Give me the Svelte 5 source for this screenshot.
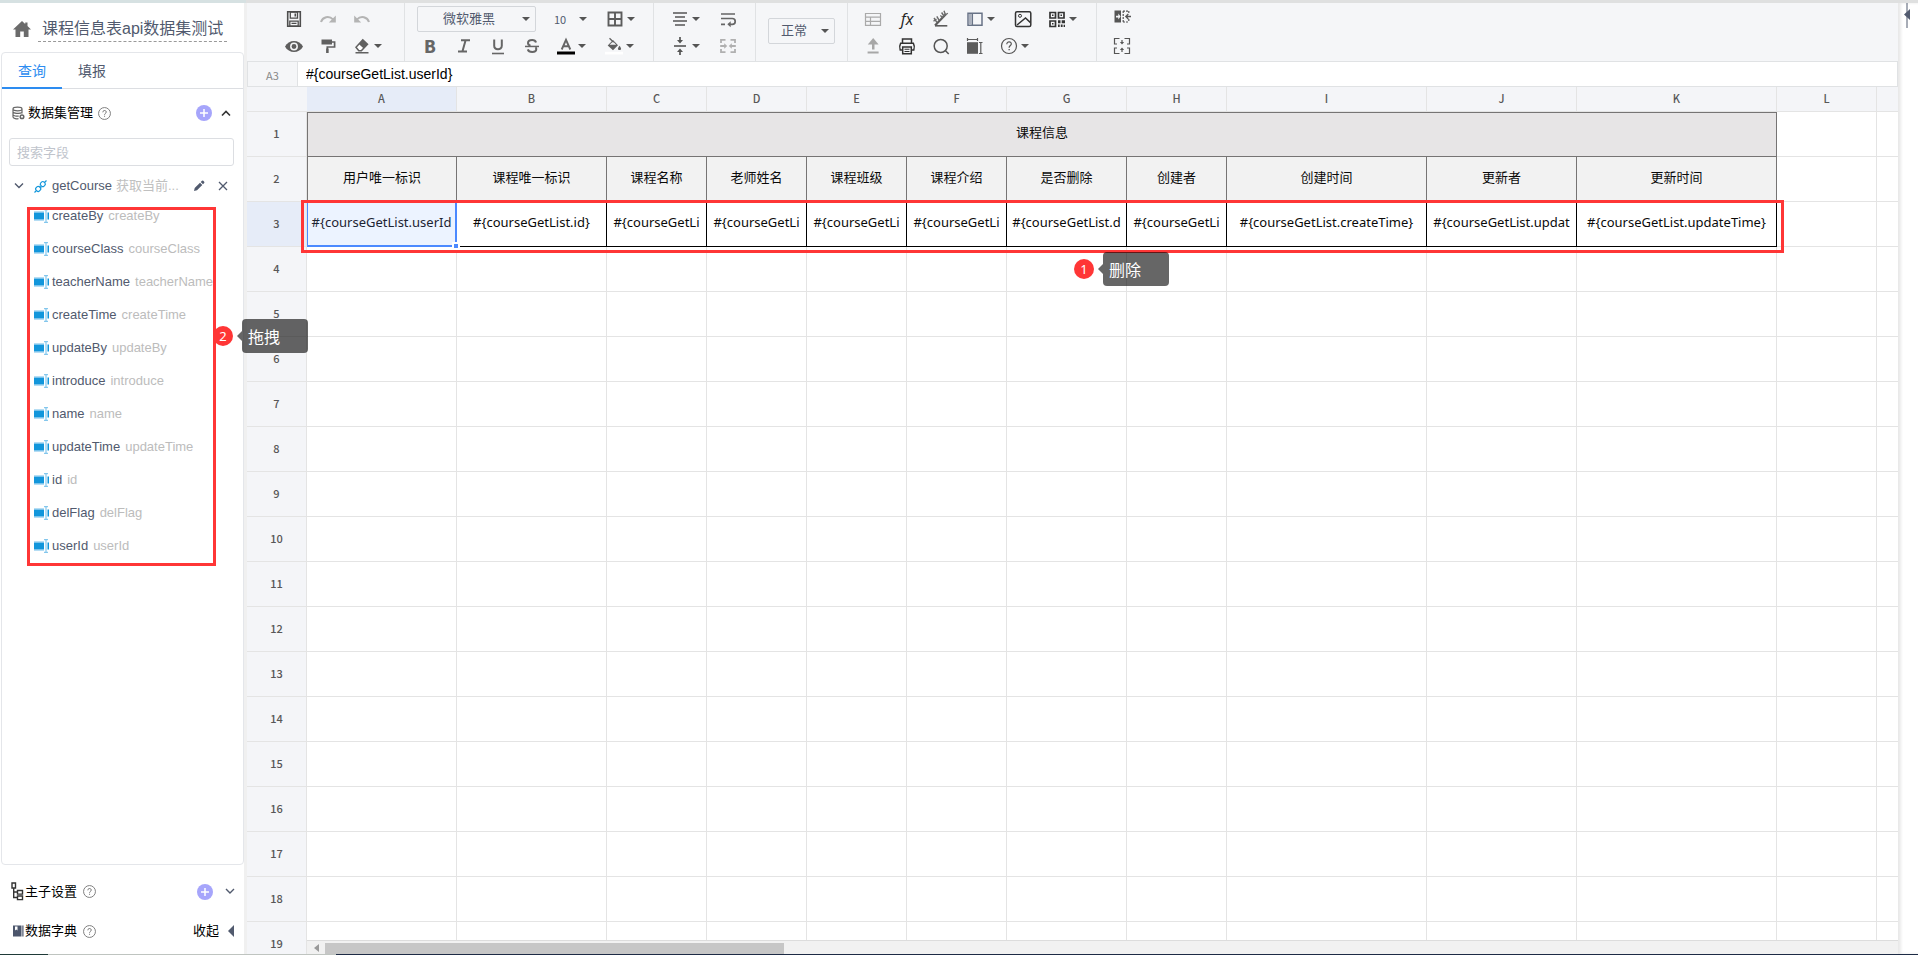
<script>
  const icons = {
    save: '<path d="M2.7 1.8h12.6v14.4H2.7z" fill="none" stroke="#4e4e4e" stroke-width="1.6"/><path d="M5.3 2h7.2v6.2H5.3zM4.8 11.2h8.4v5H4.8z" fill="none" stroke="#4e4e4e" stroke-width="1.3"/><path d="M9.5 3.5h1.6v3H9.5zM6.5 12.8h5v1.2h-5z" fill="#4e4e4e"/>',
    redo: '<path d="M2 12c1.6-5 8-6.6 12-2.6" fill="none" stroke="#b4b4b4" stroke-width="2"/><path d="M16.800 5.500v7h-7z" fill="#b4b4b4"/>',
    undo: '<path d="M16 12c-1.600-5-8-6.600-12-2.600" fill="none" stroke="#b4b4b4" stroke-width="2"/><path d="M1.200 5.500v7h7z" fill="#b4b4b4"/>',
    eye: '<path d="M0 9.500C3.600 2 14.400 2 18 9.500c-3.600 7.300-14.400 7.300-18 0z" fill="#5e5e5e"/><circle cx="9" cy="9.500" r="3.200" fill="none" stroke="#f4f5f7" stroke-width="1.500"/>',
    roller: '<path d="M2.500 2.500H13v5H2.500z" fill="#606060"/><path d="M13 5h2.600v5H8.300v6" fill="none" stroke="#606060" stroke-width="1.700"/><path d="M7.200 11.500h2.400V16H7.200z" fill="#606060"/>',
    eraser: '<path d="M3 10.200 9.800 2.800l4.700 4.400-6.200 6.600H5.800z" fill="#fff" stroke="#606060" stroke-width="1.500"/><path d="M9.800 2.800l4.700 4.400-3.800 4.200-4.900-4.500zM2.500 15h13v1.600h-13z" fill="#606060"/>',
    grid: '<path d="M2.500 2.500h13v13h-13zM9 2.500v13M2.500 9h13" fill="none" stroke="#5c5c5c" stroke-width="1.900"/>',
    strike: '<path d="M13 5.500C12.500 3.600 11 3 9.200 3 6.600 3 5 4.300 5 6c0 1.400 1 2.200 2.500 2.700M4.800 12.400c.5 1.700 2.200 2.600 4.400 2.600 2.600 0 4.100-1.100 4.100-2.900 0-.8-.3-1.300-.8-1.800" fill="none" stroke="#666" stroke-width="2"/><path d="M2 8.700h14v1.500H2z" fill="#666"/>',
    fontcolor: '<path d="M4.700 12.500 9 2.800l4.300 9.700M6.200 9.300h5.600" fill="none" stroke="#666" stroke-width="1.900"/><path d="M0 14.500h18v3H0z" fill="#000"/>',
    bucket: '<path d="M2.700 8.400 8 3l5 5.300-5 5z" fill="#606060"/><path d="M4.600 7.700 8 4.500l3.200 3.200z" fill="#f4f5f7"/><path d="M4.500 1.300 8.600 5.200" stroke="#606060" stroke-width="1.300"/><path d="M14.500 8.800c2.400 3 1.700 4.300 0 4.300s-2.400-1.300 0-4.300z" fill="#606060"/><path d="M0 14.800h18v2.700H0z" fill="#fff"/>',
    align: '<path d="M2 3h14M4 7h10M2 11h14M4 15h10" stroke="#555" stroke-width="1.700"/>',
    valign: '<path d="M3 8.200h12v1.600H3z" fill="#555"/><path d="M9 0v4M9 18v-4" stroke="#555" stroke-width="1.700"/><path d="M6 3h6L9 6.500zM6 15h6l-3-3.500z" fill="#555"/>',
    wrap: '<path d="M2 4h14M2 8.500h11.300a2.900 2.900 0 0 1 0 5.800H10M2 14.300h4" fill="none" stroke="#666" stroke-width="1.700"/><path d="M11.700 11.300v6l-3.400-3z" fill="#666"/>',
    merge: '<path d="M2 6V2.800h4.500M11.500 2.800H16V6M2 12v3.200h4.500M11.500 15.200H16V12M1.200 9h5M16.800 9h-5" fill="none" stroke="#b0b0b0" stroke-width="1.800"/><path d="M5.200 6.300v5.400L8.200 9zM12.800 6.300v5.400L9.800 9z" fill="#b0b0b0"/>',
    table: '<path d="M1.500 3.500h15v11.800h-15zM1.500 7.200h15M1.500 11.300h15M6.500 7.200v8" fill="none" stroke="#aaa" stroke-width="1.200"/>',
    axis: '<path d="M3 15.800h12.300" stroke="#5c5c5c" stroke-width="1.600" fill="none"/><path d="M3 15.500 13.800 4.300" stroke="#5c5c5c" stroke-width="2.200" fill="none"/><path d="M2 8l3 4.500M4.800 6.300l2.400 4M1.500 11.300l3-2.300M9.600 2.500l2.700 4M12 .8l1.600 4.500M8.300 5.500l2.700 2.200M15.800 3.200l-3.300 2.300" stroke="#6a6a6a" stroke-width="1.400" fill="none"/>',
    layout: '<path d="M2 3.200h14v12H2zM6.300 3.200v12" fill="none" stroke="#687386" stroke-width="1.500"/><path d="M3 4h2.600v10.500H3z" fill="#abb1bd"/>',
    image: '<rect x="1.500" y="1.800" width="15.300" height="14.600" rx="1.500" fill="none" stroke="#333" stroke-width="1.500"/><circle cx="6" cy="5.800" r="1.500" fill="none" stroke="#333"/><path d="m3 15 8.500-7 5 4.600" fill="none" stroke="#333" stroke-width="1.500"/>',
    qr: '<path d="M2 2.500h5.500V8H2zM10.500 2.500H16V8h-5.500zM2 11h5.500v5.500H2z" fill="none" stroke="#333" stroke-width="1.700"/><path d="M4 4.500h1.500V6H4zM12.500 4.500H14V6h-1.500zM4 13h1.500v1.500H4zM10 10.200h2.500v3H10zM13.700 10.200H17v3h-3.300zM10 14.500h1.700v2.500H10zM12.800 14.500h1.800V17h-1.800zM15.600 14.700H17V17h-1.400z" fill="#333"/>',
    upload: '<path d="M8 5h2.500v7.500H8zM3.600 14.500h11v2h-11z" fill="#a7a7a7"/><path d="M3.800 7.600h10.800L9.200 1z" fill="#a7a7a7"/>',
    print: '<path d="M4.500 6V2h9v4M4.500 13H2.200c-.6-1.900-.6-5 .4-6.700h12.800c1 1.700 1 4.800.4 6.700h-2.300M4.700 10h8.600v6.800H4.700z" fill="none" stroke="#333" stroke-width="1.500"/><path d="M6.500 12.200h5M6.500 14.500h5" stroke="#333" stroke-width="1.100"/>',
    search: '<circle cx="8.700" cy="9" r="6.500" fill="none" stroke="#555" stroke-width="1.500"/><path d="m13.300 13.600 3.400 3.500" stroke="#555" stroke-width="1.500"/>',
    size: '<path d="M1 5.200h11v11.600H1z" fill="#5c5c5c"/><path d="M1.500 1v3M11.500 1v3M1.500 2.500h10M13 5.500h3.500M13 16.500h3.500M14.800 5.500v11" stroke="#5c5c5c" stroke-width="1.200" fill="none"/>',
    help: '<circle cx="9" cy="9" r="7.500" fill="none" stroke="#555" stroke-width="1.200"/><path d="M6.800 7.200C6.900 3.800 11.500 4.300 11.300 7c-.1 1.500-2.200 1.700-2.200 3.700" fill="none" stroke="#555" stroke-width="1.200"/><path d="M8.500 12h1.300v1.300H8.500z" fill="#555"/>',
    colmerge: '<path d="M1.500.5h6.500v12H1.500z" fill="#555"/><path d="M3 5.700h2.300V3.500L7.600 6.500 5.300 9.500V7.500H3z" fill="#f4f5f7"/><path d="M10 1.200h6M10 12h6M10.200 1v11M15.800 1v3M15.800 9v3" stroke="#555" stroke-width="1.200" stroke-dasharray="2 1" fill="none"/><path d="M18 6.500h-5M15.300 4 12.800 6.500 15.300 9" stroke="#555" stroke-width="1.300" fill="none"/>',
    rowmerge: '<path d="M6.500 1.500h-5V7H4M11.500 1.500h5V7H14M6.500 16.500h-5V11H4M11.500 16.500h5V11H14M9 3v3M9 15v-3" fill="none" stroke="#555" stroke-width="1.200"/><path d="M6.900 5h4.200L9 7.600zM6.900 13h4.200L9 10.400z" fill="#555"/>'
  };

  const fields = ['createBy', 'courseClass', 'teacherName', 'createTime', 'updateBy', 'introduce', 'name', 'updateTime', 'id', 'delFlag', 'userId'];

  const columns = [
    { id: 'A', width: 150, title: '用户唯一标识', value: '#{courseGetList.userId' },
    { id: 'B', width: 150, title: '课程唯一标识', value: '#{courseGetList.id}' },
    { id: 'C', width: 100, title: '课程名称', value: '#{courseGetLi' },
    { id: 'D', width: 100, title: '老师姓名', value: '#{courseGetLi' },
    { id: 'E', width: 100, title: '课程班级', value: '#{courseGetLi' },
    { id: 'F', width: 100, title: '课程介绍', value: '#{courseGetLi' },
    { id: 'G', width: 120, title: '是否删除', value: '#{courseGetList.d' },
    { id: 'H', width: 100, title: '创建者', value: '#{courseGetLi' },
    { id: 'I', width: 200, title: '创建时间', value: '#{courseGetList.createTime}' },
    { id: 'J', width: 150, title: '更新者', value: '#{courseGetList.updat' },
    { id: 'K', width: 200, title: '更新时间', value: '#{courseGetList.updateTime}' }
  ];
  const emptyRows = Array.from({ length: 16 }, (_, i) => i + 4);

  let formula = $state('#{courseGetList.userId}');
  let query = $state('');
</script>

{#snippet caret()}
  <svg class="caret" viewBox="0 0 8 4" aria-hidden="true"><path d="M0 0h8L4 4z" fill="#555" /></svg>
{/snippet}

{#snippet tool(name, label, drop = false)}
  <button class="tool" class:drop aria-label={label}>
    <svg class="glyph" viewBox="0 0 18 18" aria-hidden="true">{@html icons[name]}</svg>
    {#if drop}{@render caret()}{/if}
  </button>
{/snippet}

{#snippet help()}
  <svg class="help" viewBox="0 0 14 14" aria-hidden="true">
    <circle cx="7" cy="7" r="6.400" fill="none" stroke="#777" stroke-width="1" />
    <path d="M5.200 5.700c0-2.600 3.700-2.400 3.700-.2C8.900 6.800 7.100 6.900 7.100 8.300" fill="none" stroke="#666" stroke-width="1" />
    <path d="M6.600 9.400h1v1h-1z" fill="#666" />
  </svg>
{/snippet}

{#snippet plus(label)}
  <button class="plus" aria-label={label}>
    <svg viewBox="0 0 16 16" aria-hidden="true"><circle cx="8" cy="8" r="8" fill="#a6a5fb" /><path d="M8 4v8M4 8h8" stroke="#fff" stroke-width="1.500" /></svg>
  </button>
{/snippet}

<div class="page">
  <div class="strip-top"></div>
  <div class="body">
    <aside>
      <header class="title-row">
        <a href="#home" aria-label="首页">
          <svg class="home" viewBox="0 0 18 18"><path d="M9 1 0 9.500h2.500V17h4.700v-5.500h3.600V17h4.700V9.500H18L14.500 6V2.500h-2.300v1.400z" fill="#6b6b6b" /></svg>
        </a>
        <span class="title">课程信息表api数据集测试</span>
      </header>

      <section class="card">
        <nav class="tabs">
          <button class="tab active">查询</button>
          <button class="tab">填报</button>
        </nav>
        <div class="section-head">
          <svg class="db" viewBox="0 0 13 14" aria-hidden="true">
            <path d="M1 3C1 .6 10 .6 10 3S1 5.400 1 3zM1 3v8c0 1.600 4 2 5.500 1.700M10 3v4.500M1 5.800c0 1.700 7 2.200 9 .8M1 8.600c0 1.400 4 1.800 5.800 1.400" fill="none" stroke="#666" stroke-width="1.200" />
            <circle cx="10" cy="10.800" r="1.800" fill="none" stroke="#666" stroke-width="1.500" />
          </svg>
          <span>数据集管理</span>
          {@render help()}
          <i class="grow"></i>
          {@render plus('新增数据集')}
          <svg class="chev" viewBox="0 0 10 10"><path d="m1 7.500 4-4 4 4" fill="none" stroke="#333" stroke-width="1.600" /></svg>
        </div>
        <input class="search" placeholder="搜索字段" aria-label="搜索字段" bind:value={query} />
        <div class="node">
          <svg class="chev" viewBox="0 0 10 10"><path d="m1 2.500 4 4 4-4" fill="none" stroke="#515a6e" stroke-width="1.400" /></svg>
          <svg class="link" viewBox="0 0 13 13">
            <g fill="none" stroke="#1296db" stroke-width="1.200"><rect x="6.500" y="1.800" width="4.600" height="4.600" rx="1.800" transform="rotate(45 8.800 4.100)" /><rect x="1.900" y="6.600" width="4.600" height="4.600" rx="1.800" transform="rotate(45 4.200 8.900)" /><path d="m10.500 2.500 2-2M.5 12.500l2-2M5.500 6l1.800 1.800" /></g>
          </svg>
          <span class="node-name">getCourse</span>
          <span class="node-desc">获取当前...</span>
          <button class="mini" aria-label="编辑"><svg viewBox="0 0 12 12"><path d="M1 11l.7-3L7 2.700 9.300 5 4 10.300zM7.700 2 9 .8q.7-.5 1.300 0l.9.900q.5.700 0 1.300L10 4.300z" fill="#515a6e" /></svg></button>
          <button class="mini" aria-label="删除"><svg viewBox="0 0 12 12"><path d="m2 2 8 8M10 2l-8 8" stroke="#515a6e" stroke-width="1.300" /></svg></button>
        </div>
        <ul class="fields">
          {#each fields as f}
            <li>
              <svg class="field" viewBox="0 0 16 14" aria-hidden="true"><path d="M0 3.500h10v7H0zM13.500 3.500H15v7h-1.500z" fill="#1296db" /><path d="M0 3h10M0 11h10M10 .700h4M10 13.300h4M12 .700v12.600" stroke="#6cbce9" stroke-width="1" fill="none" /></svg>
              <span>{f}</span><span class="alias">{f}</span>
            </li>
          {/each}
        </ul>
      </section>

      <div class="foot">
        <svg class="tree" viewBox="0 0 13 19" aria-hidden="true"><path d="M1 1h3.500v5H1zM2.700 6v9.500H6M2.700 10H6M6.500 8.500h5v3.600h-5zM6.500 14h5v3.600h-5z" fill="none" stroke="#333" stroke-width="1.400" /></svg>
        <span>主子设置</span>
        {@render help()}
        <i class="grow"></i>
        {@render plus('新增主子设置')}
        <svg class="chev" viewBox="0 0 10 10"><path d="m1 2 4 4 4-4" fill="none" stroke="#515a6e" stroke-width="1.400" /></svg>
      </div>
      <div class="foot second">
        <svg class="book" viewBox="0 0 12 12" aria-hidden="true"><path d="M1 .5h8.500v11H1zM10.300.5h1.200v11h-1.200z" fill="#4c566c" /><path d="M3 1.500h2.500v4L4.200 4.500 3 5.500z" fill="#fff" /></svg>
        <span>数据字典</span>
        {@render help()}
        <i class="grow"></i>
        <button class="fold">收起 <svg viewBox="0 0 6 12"><path d="M6 0v12L0 6z" fill="#515a6e" /></svg></button>
      </div>
    </aside>

    <main>
      <div class="toolbar">
        <div class="group g1">
          <div class="line">{@render tool('save', '保存')}{@render tool('redo', '重做')}{@render tool('undo', '撤销')}</div>
          <div class="line">{@render tool('eye', '预览')}{@render tool('roller', '格式刷')}{@render tool('eraser', '清除', true)}</div>
        </div>
        <div class="group g2">
          <div class="line">
            <label class="pick font"><select aria-label="字体"><option>微软雅黑</option></select>{@render caret()}</label>
            <label class="pick num"><select aria-label="字号"><option>10</option></select>{@render caret()}</label>
            {@render tool('grid', '边框', true)}
          </div>
          <div class="line">
            <button class="tool letter"><b>B</b></button>
            <button class="tool" aria-label="斜体"><svg class="glyph" viewBox="0 0 18 18"><path d="M6 3.200h9M3 14.500h9M10.600 3.200 7.400 14.500" stroke="#666" stroke-width="2" fill="none" /></svg></button>
            <button class="tool" aria-label="下划线"><svg class="glyph" viewBox="0 0 18 18"><path d="M5.200 2.500v6.300c0 4.600 7.600 4.600 7.600 0V2.500" stroke="#666" stroke-width="2" fill="none" /><path d="M3 15.700h12v1.600H3z" fill="#666" /></svg></button>
            {@render tool('strike', '删除线')}{@render tool('fontcolor', '文字颜色', true)}{@render tool('bucket', '填充颜色', true)}
          </div>
        </div>
        <div class="group g3">
          <div class="line">{@render tool('align', '水平对齐', true)}{@render tool('wrap', '自动换行')}</div>
          <div class="line">{@render tool('valign', '垂直对齐', true)}{@render tool('merge', '合并单元格')}</div>
        </div>
        <div class="group g4">
          <label class="pick mode"><select aria-label="格式"><option>正常</option></select>{@render caret()}</label>
        </div>
        <div class="group g5">
          <div class="line">
            {@render tool('table', '表格')}
            <button class="tool fx">fx</button>
            {@render tool('axis', '斜线')}{@render tool('layout', '冻结', true)}{@render tool('image', '图片')}{@render tool('qr', '二维码', true)}
          </div>
          <div class="line">{@render tool('upload', '导入')}{@render tool('print', '打印')}{@render tool('search', '搜索')}{@render tool('size', '尺寸')}{@render tool('help', '帮助', true)}</div>
        </div>
        <div class="group g6">
          <div class="line">{@render tool('colmerge', '列合并')}</div>
          <div class="line">{@render tool('rowmerge', '行合并')}</div>
        </div>
      </div>

      <div class="formula">
        <span class="ref">A3</span>
        <input aria-label="公式" bind:value={formula} />
      </div>

      <div class="sheet">
        <table>
          <colgroup>
            <col style="width: 60px" />
            {#each columns as c}<col style="width: {c.width}px" />{/each}
            <col style="width: 100px" />
            <col />
          </colgroup>
          <thead>
            <tr>
              <th class="corner"></th>
              {#each columns as c}<th class:on={c.id === 'A'}>{c.id}</th>{/each}
              <th>L</th>
              <th></th>
            </tr>
          </thead>
          <tbody>
            <tr>
              <th>1</th>
              <td class="banner" colspan="11">课程信息</td>
              <td></td><td></td>
            </tr>
            <tr>
              <th>2</th>
              {#each columns as c}<td class="head">{c.title}</td>{/each}
              <td></td><td></td>
            </tr>
            <tr>
              <th class="on">3</th>
              {#each columns as c}
                <td class="value" class:selected={c.id === 'A'}>{c.value}{#if c.id === 'A'}<i class="handle"></i>{/if}</td>
              {/each}
              <td></td><td></td>
            </tr>
            {#each emptyRows as r}
              <tr>
                <th>{r}</th>
                {#each columns as c}<td></td>{/each}
                <td></td><td></td>
              </tr>
            {/each}
          </tbody>
        </table>
        <div class="scroll">
          <svg viewBox="0 0 5 8"><path d="M5 0v8L0 4z" fill="#999" /></svg>
          <div class="thumb"></div>
        </div>
      </div>
    </main>
    <div class="rail">
      <button aria-label="展开"><svg viewBox="0 0 8 25"><path d="M4 0v25" stroke="#515a6e" /><path d="M7 6v11L1 11.500z" fill="#515a6e" /></svg></button>
    </div>
  </div>
  <div class="strip-bottom"></div>

  <div class="mark fields-mark"></div>
  <div class="mark row-mark"></div>
  <div class="note delete-note"><span class="dot">1</span><span class="tip">删除</span></div>
  <div class="note drag-note"><span class="dot">2</span><span class="tip">拖拽</span></div>
</div>

<style>
  :global(body) { margin: 0; overflow: hidden; }
  .page {
    position: relative; display: flex; flex-direction: column; height: 100vh; overflow: hidden;
    font: 13px/20px "Liberation Sans", "Noto Sans CJK SC", sans-serif; color: #515a6e; background: #fff;
  }
  .page :global(*) { box-sizing: border-box; }
  button { border: 0; padding: 0; background: none; font: inherit; color: inherit; }
  svg { display: block; flex: none; }
  .strip-top { flex: none; height: 3px; background: linear-gradient(90deg, #d6e1e2 246px, #dfe0e0 246px); }
  .strip-bottom { flex: none; height: 1px; background: linear-gradient(90deg, #1f3a38 48px, #bfc4c0 48px 336px, #1d2b45 336px); }
  .body { flex: 1; display: flex; min-height: 0; }

  aside { flex: none; width: 247px; display: flex; flex-direction: column; border-right: 3px solid #f0f0f0; }
  .title-row { display: flex; align-items: center; height: 49px; padding: 0 0 0 13px; gap: 7px; }
  .home { width: 18px; height: 18px; margin-top: 2px; }
  .title { font-size: 16px; line-height: 25px; padding: 0 4px; border-bottom: 1px dashed #999; white-space: nowrap; margin-top: 3px; }
  .card { flex: 1; min-height: 0; margin-left: 1px; border: 1px solid #e4e6ea; border-radius: 4px; }
  .tabs { display: flex; height: 36px; border-bottom: 1px solid #dcdee2; }
  .tab { width: 60px; height: 36px; font-size: 14px; border-bottom: 2px solid transparent; padding-top: 2px; }
  .tab.active { color: #2d8cf0; border-color: #2d8cf0; }
  .section-head { display: flex; align-items: center; height: 49px; padding: 0 12px 1px 10px; color: #000; }
  .section-head span { margin: 0 5px 0 3px; }
  .db { width: 13px; height: 14px; }
  .help { width: 13px; height: 13px; }
  .grow { flex: 1; }
  .plus, .plus svg { width: 16px; height: 16px; }
  .chev { width: 10px; height: 10px; }
  .section-head .chev { margin-left: 9px; }
  .search {
    display: block; width: 225px; height: 28px; margin-left: 7px; padding: 0 7px;
    border: 1px solid #dcdee2; border-radius: 3px; font: inherit; outline: 0;
  }
  .search::placeholder { color: #c0c4cc; }
  .node { display: flex; align-items: center; height: 40px; padding-left: 12px; }
  .link { width: 13px; height: 13px; margin: 0 5px 0 10px; }
  .node-desc { flex: none; width: 65px; margin: 0 12px 0 4px; color: #c0c0c0; white-space: nowrap; }
  .mini { width: 12px; height: 12px; margin-right: 12px; }
  .mini svg { width: 12px; height: 12px; }
  .fields { list-style: none; margin: 0; padding: 0 0 0 32px; }
  .fields li { display: flex; align-items: center; height: 33px; white-space: nowrap; }
  .fields li:first-child { height: 26px; padding-bottom: 6px; }
  .field { width: 16px; height: 14px; margin-right: 2px; }
  .alias { margin-left: 5px; color: #bcbcbc; }
  .foot { flex: none; display: flex; align-items: center; height: 50px; padding: 3px 9px 0 11px; color: #000; }
  .foot span { margin: 0 6px 0 1px; }
  .foot .chev { margin-left: 12px; }
  .tree { width: 13px; height: 19px; }
  .book { width: 12px; height: 12px; }
  .second { height: 39px; padding: 0 10px 7px 12px; }
  .fold { display: flex; align-items: center; gap: 9px; }
  .fold svg { width: 6px; height: 12px; }

  main { flex: 1; min-width: 0; display: flex; flex-direction: column; }
  .toolbar { flex: none; display: flex; height: 58px; background: #f5f6f8; }
  .group { padding-top: 2px; border-right: 1px solid #e0e2e4; }
  .line { display: flex; align-items: center; height: 27px; }
  .g1 { width: 158px; padding-left: 30px; }
  .g2 { width: 249px; padding-left: 8px; }
  .g3 { width: 102px; padding-left: 9px; }
  .g4 { width: 92px; padding: 15px 12px 0; }
  .g5 { width: 249px; padding-left: 8px; }
  .g6 { padding-left: 8px; border: 0; }
  .tool { display: flex; align-items: center; justify-content: center; width: 34px; height: 27px; }
  .tool.drop { width: 48px; justify-content: flex-start; padding-left: 8px; gap: 3px; }
  .glyph { width: 18px; height: 18px; }
  .caret { width: 8px; height: 4px; }
  .letter { font: 700 17px/20px "Noto Sans CJK SC", sans-serif; color: #666; }
  .fx { font: italic 16px/20px "Open Sans", sans-serif; color: #222; }
  .pick { display: grid; align-items: center; }
  .pick select, .pick .caret { grid-area: 1 / 1; }
  .pick .caret { justify-self: end; margin-right: 6px; pointer-events: none; }
  .pick select {
    appearance: none; width: 100%; height: 26px; margin: 0; border: 1px solid #d3d6da; border-radius: 2px;
    background: transparent; color: #515a6e; font: 13px/20px "Noto Sans CJK SC", sans-serif;
  }
  .font { width: 119px; margin-left: 4px; }
  .font select { padding: 0 0 2px 25px; }
  .num { width: 48px; margin-left: 14px; }
  .num select { border: 0; padding: 0 0 0 4px; font-size: 11px; }
  .num .caret { margin-right: 11px; }
  .mode select { padding: 0 0 2px 12px; }

  .formula { flex: none; display: flex; height: 26px; border: 1px solid #e0e2e4; }
  .ref { width: 50px; border-right: 1px solid #e0e2e4; background: #f5f6f8; color: #888; text-align: center; font: 11px/26px "Noto Sans CJK SC", sans-serif; }
  .formula input { flex: 1; min-width: 0; border: 0; outline: 0; padding: 0 8px; font: 14px/20px "Liberation Sans", sans-serif; color: #000; }

  .sheet { position: relative; flex: 1; min-height: 0; overflow: hidden; }
  table { width: 100%; table-layout: fixed; border-collapse: separate; border-spacing: 0; }
  th, td { height: 45px; padding: 0 0 4px; border: solid #e4e4e4; border-width: 0 1px 1px 0; text-align: center; white-space: nowrap; overflow: hidden; }
  th { padding-bottom: 2px; background: #f4f5f8; color: #585757; font: 500 11px/18px "Noto Sans CJK SC", sans-serif; }
  thead th { height: 25px; }
  th:last-child, td:last-child { border-right: 0; }
  .corner { border-right: 0; }
  th.on { background: #e6ecf8; }
  td { background: #fff; color: #0a0a0a; font: 13px/20px "Noto Sans", "Noto Sans CJK SC", sans-serif; }
  td.banner { padding-bottom: 6px; background: #e7e5e6; border: 1px solid #767474; }
  td.head { background: #f2f2f2; border-color: #767474; }
  td.head:nth-child(2) { border-left: 1px solid #767474; }
  td.value { border-color: #000; }
  td.selected { position: relative; overflow: visible; padding-bottom: 3px; background: #ecf3ff; border: solid #4b89ff; border-width: 0 2px 2px 1px; color: #1c2433; }
  .handle { position: absolute; z-index: 1; right: -5px; bottom: -5px; width: 8px; height: 8px; border: 2px solid #fff; background: #4b89ff; }
  .scroll { position: absolute; inset: auto 0 0 60px; display: flex; align-items: flex-end; height: 14px; padding-left: 7px; gap: 6px; border-top: 1px solid #dcdcdc; background: #f1f1f1; }
  .scroll svg { width: 5px; height: 8px; align-self: center; }
  .thumb { width: 29%; height: 11px; background: #c6c6c6; }
  .rail { flex: none; width: 20px; box-shadow: inset 3px 0 3px #e9e9e9; }
  .rail button { display: block; margin-left: 5px; }
  .rail svg { width: 8px; height: 25px; }

  .mark { position: absolute; border: 3px solid #ff3636; pointer-events: none; }
  .fields-mark { left: 27px; top: 207px; width: 189px; height: 359px; }
  .row-mark { left: 301px; top: 200px; width: 1483px; height: 53px; }
  .note { position: absolute; display: flex; align-items: center; gap: 9px; }
  .delete-note { left: 1074px; top: 252px; }
  .drag-note { left: 213px; top: 319px; }
  .dot { width: 20px; height: 20px; border-radius: 50%; background: #ff3636; color: #fff; text-align: center; font: 13px/20px "Noto Sans", sans-serif; }
  .tip { position: relative; width: 66px; height: 34px; padding-left: 6px; border-radius: 4px; background: rgba(0, 0, 0, 0.6); color: #fff; font: 16px/34px "Noto Sans CJK SC", sans-serif; }
  .tip::before { content: ""; position: absolute; left: -5px; top: 12px; border: solid transparent; border-width: 5px 5px 5px 0; border-right-color: rgba(0, 0, 0, 0.6); }
</style>
